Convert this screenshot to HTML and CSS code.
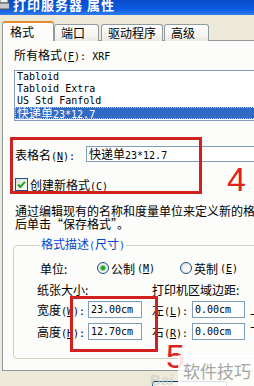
FILE: index.html
```html
<!DOCTYPE html>
<html lang="zh-CN">
    <head>
        <meta charset="UTF-8" />
        <title>打印服务器 属性</title>
        <link rel="stylesheet" href="styles.css">
    </head>
    <body>
        <div class="dialog">
            <div class="titlebar">
                <svg class="title-icon" width="12" height="12" viewBox="0 0 12 12">
                    <rect x="2" y="0" width="8" height="4" fill="#f4f4f4" stroke="#666" />
                    <rect x="0.5" y="4" width="11" height="6" rx="1" fill="#c9c9c9" stroke="#555" />
                </svg>
                <span class="title">打印服务器 属性</span>
            </div>

            <div class="tabs">
                <div class="tab active">格式</div>
                <div class="tab">端口</div>
                <div class="tab">驱动程序</div>
                <div class="tab">高级</div>
            </div>

            <div class="panel">
                <div class="field-label">所有格式<span class="mono">(<u>F</u>): XRF</span></div>
                <ul class="listbox">
                    <li class="mono">Tabloid</li>
                    <li class="mono">Tabloid Extra</li>
                    <li class="mono">US Std Fanfold</li>
                    <li class="selected">快递单<span class="mono">23*12.7</span></li>
                </ul>

                <div class="name-row">
                    <span class="name-label">表格名<span class="mono">(<u>N</u>):</span></span>
                    <div class="textbox">快递单<span class="mono">23*12.7</span></div>
                </div>

                <div class="check-row">
                    <span class="checkbox">
                        <svg width="11" height="11" viewBox="0 0 11 11">
                            <path d="M2 5.5 L4.3 8 L9 2.8" fill="none" stroke="#21a121" stroke-width="2" />
                        </svg>
                    </span>
                    <span>创建新格式<span class="mono">(<u>C</u>)</span></span>
                </div>

                <p class="desc">通过编辑现有的名称和度量单位来定义新的格式，然<br />后单击“保存格式”。</p>

                <fieldset class="group">
                    <legend>格式描述<span class="mono">(</span>尺寸<span class="mono">)</span></legend>
                    <div class="unit-row">
                        <span class="unit-label">单位:</span>
                        <span class="option"><span class="radio checked"></span>公制<span class="mono">(<u>M</u>)</span></span>
                        <span class="option"><span class="radio"></span>英制<span class="mono">(<u>E</u>)</span></span>
                    </div>
                    <div class="size-grid">
                        <span class="col-head">纸张大小:</span>
                        <span></span>
                        <span class="col-head wide">打印机区域边距:</span>

                        <span>宽度<span class="mono">(<u>W</u>):</span></span>
                        <span class="numbox mono">23.00cm</span>
                        <span></span>
                        <span>左<span class="mono">(<u>L</u>):</span></span>
                        <span class="numbox mono">0.00cm</span>
                        <span class="cut">上<span class="mono">(<u>T</u>):</span></span>

                        <span>高度<span class="mono">(<u>H</u>):</span></span>
                        <span class="numbox mono">12.70cm</span>
                        <span></span>
                        <span>右<span class="mono">(<u>R</u>):</span></span>
                        <span class="numbox mono">0.00cm</span>
                        <span class="cut">下<span class="mono">(<u>B</u>):</span></span>
                    </div>
                </fieldset>
            </div>

            <div class="buttons">
                <span class="button"></span>
            </div>
        </div>

        <!-- tutorial markup drawn over the dialog -->
        <div class="mark-box mark-one"></div>
        <div class="mark-num num-four">4</div>
        <div class="mark-box mark-two"></div>
        <div class="mark-num num-five">5</div>
        <div class="watermark">
            <span class="wm-bai">Bai</span>
            <span class="wm-text">软件技巧</span>
        </div>
    </body>
</html>
```

FILE: styles.css
```css
body {
    margin: 0;
    width: 254px;
    height: 386px;
    overflow: hidden;
    position: relative;
    background: #ece9d8;
    font-family: "Noto Sans CJK SC", "DejaVu Sans", sans-serif;
    font-size: 12px;
    color: #000;
}
u {
    text-decoration: underline;
}
.mono {
    font-family: "DejaVu Sans Mono", "Liberation Mono", monospace;
    font-size: 10px;
}
.dialog {
    width: 400px;
}
.titlebar {
    height: 15px;
    overflow: hidden;
    display: flex;
    align-items: flex-end;
    gap: 3px;
    padding-bottom: 4px;
    box-sizing: border-box;
    background: linear-gradient(#0a4cc8, #0b5ae0 60%, #2f7bef);
}
.title-icon {
    flex-shrink: 0;
    margin-left: -2px;
}
.title {
    color: #fff;
    font-weight: bold;
    font-size: 13px;
    line-height: 13px;
    letter-spacing: 1px;
}
.tabs {
    display: flex;
    align-items: flex-end;
    height: 19px;
    margin-top: 7px;
    padding-left: 2px;
    position: relative;
    z-index: 1;
}
.tab {
    height: 16px;
    line-height: 16px;
    padding: 0 6px;
    margin-right: -1px;
    border: 1px solid #919b9c;
    border-bottom: none;
    border-radius: 3px 3px 0 0;
    background: linear-gradient(#fefefe, #f4f3ee 70%, #e8e7e0);
}
.tab:nth-child(2) {
    width: 31px;
}
.tab:nth-child(3) {
    margin-left: 3px;
}
.tab:nth-child(4) {
    margin-left: 2px;
    width: 31px;
}
.tab.active {
    height: 18px;
    width: 36px;
    padding: 0 7px;
    line-height: 18px;
    background: #fcfcfa;
    border-top: 2px solid #e68b2c;
    margin-right: 0;
}
.panel {
    margin-top: -1px;
    margin-left: 2px;
    height: 331px;
    box-sizing: border-box;
    border: 1px solid #919b9c;
    background: #fcfcfa;
    padding: 7px 0 0 11px;
}
.field-label {
    line-height: 14px;
}
.listbox {
    list-style: none;
    margin: 6px 0 0;
    padding: 0 0 1px;
    height: 51px;
    box-sizing: border-box;
    border: 1px solid #7f9db9;
    background: #fff;
}
.listbox li {
    height: 12px;
    line-height: 12px;
    padding-left: 2px;
}
.listbox li.mono {
    font-size: 10px;
}
.listbox .selected {
    background: #316ac5;
    color: #fff;
    outline: 1px dotted #b9c9e6;
    outline-offset: -1px;
}
.name-row {
    display: flex;
    align-items: center;
    margin-top: 25px;
    height: 16px;
}
.name-label {
    width: 71px;
    padding-left: 1px;
}
.textbox {
    flex: 1;
    height: 16px;
    line-height: 14px;
    box-sizing: border-box;
    border: 1px solid #7f9db9;
    background: #fff;
    padding-left: 2px;
}
.check-row {
    display: flex;
    align-items: center;
    gap: 2px;
    margin-top: 16px;
    height: 13px;
    padding-left: 1px;
}
.checkbox {
    width: 11px;
    height: 11px;
    border: 1px solid #1c5180;
    background: linear-gradient(135deg, #dcdcd7, #fff);
    display: flex;
}
.desc {
    margin: 13px 0 0;
    padding-left: 1px;
    line-height: 13px;
    white-space: nowrap;
}
.group {
    margin: 7px 0 0 -1px;
    padding: 8px 0 0 23px;
    min-width: 0;
    height: 122px;
    box-sizing: border-box;
    border: 1px solid #d0d0bf;
    border-radius: 4px;
}
.group legend {
    color: #0046d5;
    padding: 0 1px;
    margin-left: 3px;
    line-height: 14px;
}
.unit-row {
    display: flex;
    align-items: center;
    height: 14px;
}
.unit-label {
    width: 60px;
    padding-left: 3px;
    box-sizing: border-box;
}
.option {
    display: flex;
    align-items: center;
    gap: 2px;
    width: 83px;
}
.radio {
    width: 10px;
    height: 10px;
    border: 1px solid #1c5180;
    border-radius: 50%;
    background: radial-gradient(circle at 65% 65%, #fff, #dcdcd7);
    display: flex;
    align-items: center;
    justify-content: center;
}
.radio.checked::after {
    content: "";
    width: 4px;
    height: 4px;
    border-radius: 50%;
    background: #21a121;
    box-shadow: 0 0 0 1px #7bd47b;
}
.size-grid {
    display: grid;
    grid-template-columns: 51px 54px 10px 40px 53px 20px;
    grid-template-rows: 14px 17px 17px;
    row-gap: 5px;
    align-items: center;
    margin-top: 7px;
}
.size-grid .col-head {
    grid-column: span 2;
    white-space: nowrap;
}
.size-grid .wide {
    grid-column: 4 / 7;
}
.numbox {
    height: 17px;
    line-height: 15px;
    box-sizing: border-box;
    border: 1px solid #7f9db9;
    background: #fff;
    padding-left: 2px;
    align-self: stretch;
}
.cut {
    padding-left: 5px;
    white-space: nowrap;
}
.buttons {
    padding: 10px 0 0 152px;
}
.button {
    display: block;
    width: 73px;
    height: 21px;
    border: 1px solid #003c74;
    border-radius: 3px;
    background: #f5f4ea;
}
.mark-box {
    position: absolute;
    border: 3px solid #d2201f;
}
.mark-one {
    left: 10px;
    top: 137px;
    width: 186px;
    height: 51px;
}
.mark-two {
    left: 70px;
    top: 296px;
    width: 82px;
    height: 50px;
}
.mark-num {
    position: absolute;
    color: #e0221e;
    font-family: "Liberation Sans", Arial, sans-serif;
    font-size: 34px;
    line-height: 34px;
}
.num-four {
    left: 227px;
    top: 162px;
}
.num-five {
    left: 166px;
    top: 339px;
}
.watermark {
    position: absolute;
    left: 150px;
    top: 355px;
    width: 104px;
    height: 31px;
}
.wm-bai {
    position: absolute;
    left: 0;
    top: 16px;
    font-family: "Liberation Sans", Arial, sans-serif;
    font-weight: bold;
    font-size: 15px;
    color: rgba(200, 200, 200, 0.6);
}
.wm-text {
    position: absolute;
    left: 28px;
    top: 0;
    width: 76px;
    height: 31px;
    background: rgba(255, 255, 255, 0.85);
    color: #a6a6a6;
    font-size: 17px;
    line-height: 31px;
    padding-left: 5px;
    box-sizing: border-box;
    white-space: nowrap;
}
```
